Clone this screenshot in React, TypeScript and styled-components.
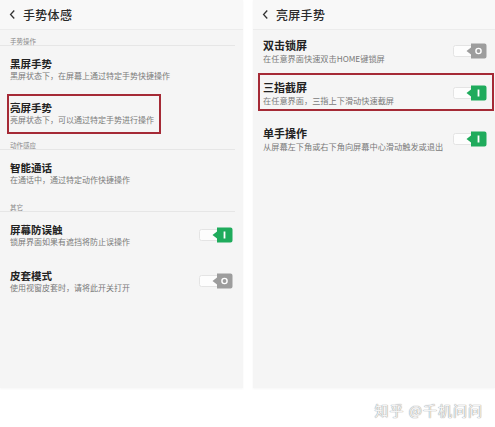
import styled, { createGlobalStyle } from 'styled-components';

const GlobalStyle = createGlobalStyle`
  html, body {
    margin: 0;
    padding: 0;
    background: #ffffff;
    font-family: "Noto Sans CJK SC", "Noto Sans", sans-serif;
  }
`;

type Setting = {
  title: string;
  desc: string;
  toggle?: 'on' | 'off';
  boxed?: boolean;
};

type Section = {
  label?: string;
  items: Setting[];
};

const leftSections: Section[] = [
  {
    label: '手势操作',
    items: [
      { title: '黑屏手势', desc: '黑屏状态下，在屏幕上通过特定手势快捷操作' },
      { title: '亮屏手势', desc: '亮屏状态下，可以通过特定手势进行操作', boxed: true },
    ],
  },
  {
    label: '动作感应',
    items: [{ title: '智能通话', desc: '在通话中，通过特定动作快捷操作' }],
  },
  {
    label: '其它',
    items: [
      { title: '屏幕防误触', desc: '锁屏界面如果有遮挡将防止误操作', toggle: 'on' },
      { title: '皮套模式', desc: '使用视窗皮套时，请将此开关打开', toggle: 'off' },
    ],
  },
];

const rightSections: Section[] = [
  {
    items: [
      { title: '双击锁屏', desc: '在任意界面快速双击HOME键锁屏', toggle: 'off' },
      { title: '三指截屏', desc: '在任意界面，三指上下滑动快速截屏', toggle: 'on', boxed: true },
      { title: '单手操作', desc: '从屏幕左下角或右下角向屏幕中心滑动触发或退出', toggle: 'on' },
    ],
  },
];

function Toggle({ on }: { on: boolean }) {
  return (
    <svg width="34" height="16" viewBox="0 0 34 16">
      <rect x="0.5" y="2.5" width="24" height="11" rx="2" fill="#fdfdfd" stroke="#e4e4e4" />
      <path
        d="M18 0.5 h13.5 a2 2 0 0 1 2 2 v11 a2 2 0 0 1 -2 2 h-13.5 v-4 l-4.5 -3.5 l4.5 -3.5 z"
        fill={on ? '#1fab5c' : '#9d9d9d'}
      />
      {on ? (
        <rect x="24.6" y="4.5" width="1.8" height="7" fill="#ffffff" />
      ) : (
        <circle cx="25.5" cy="8" r="2.6" fill="none" stroke="#ffffff" strokeWidth="1.4" />
      )}
    </svg>
  );
}

function Panel({ title, sections, wide }: { title: string; sections: Section[]; wide?: boolean }) {
  return (
    <PanelBox $wide={wide}>
      <Header>
        <Chevron viewBox="0 0 8 12">
          <path d="M6 1.5 L1.8 6 L6 10.5" fill="none" stroke="#333" strokeWidth="1.5" />
        </Chevron>
        <HeaderTitle>{title}</HeaderTitle>
      </Header>
      {sections.map((section, i) => (
        <div key={i}>
          {section.label && <SectionLabel>{section.label}</SectionLabel>}
          {section.items.map(item => (
            <Row key={item.title} $boxed={item.boxed} $wide={wide}>
              <RowInner $boxed={item.boxed} $stretch={wide}>
                <Texts>
                  <Title $wide={wide}>{item.title}</Title>
                  <Desc $wide={wide}>{item.desc}</Desc>
                </Texts>
                {item.toggle && <Toggle on={item.toggle === 'on'} />}
              </RowInner>
            </Row>
          ))}
        </div>
      ))}
    </PanelBox>
  );
}

export default function App() {
  return (
    <Page>
      <GlobalStyle />
      <Panels>
        <Panel title="手势体感" sections={leftSections} />
        <Panel title="亮屏手势" sections={rightSections} wide />
      </Panels>
      <Watermark>知乎 @千机问问</Watermark>
    </Page>
  );
}

const Page = styled.div`
  width: 495px;
  height: 427px;
  display: flex;
  flex-direction: column;
  overflow: hidden;
`;

const Panels = styled.div`
  display: flex;
  gap: 10px;
  height: 388px;
`;

const PanelBox = styled.div<{ $wide?: boolean }>`
  width: ${p => (p.$wide ? '242px' : '243px')};
  height: 100%;
  background: #f5f5f5;
  box-shadow: 0 1px 2px rgba(0, 0, 0, 0.04);
`;

const Header = styled.div`
  height: 30px;
  box-sizing: border-box;
  display: flex;
  align-items: center;
  gap: 7px;
  padding-left: 9px;
  background: #f8f8f8;
  border-bottom: 1px solid #ececec;
`;

const Chevron = styled.svg`
  width: 7px;
  height: 11px;
`;

const HeaderTitle = styled.div`
  font-size: 12px;
  font-weight: 500;
  color: #2a2a2a;
  letter-spacing: 0.3px;
  line-height: 14px;
`;

const SectionLabel = styled.div`
  height: 16px;
  box-sizing: border-box;
  padding: 7px 0 0 10px;
  font-size: 6.5px;
  line-height: 8px;
  color: #8a8a8a;
  border-bottom: 1px solid #e6e6e6;
  margin-right: 8px;
`;

const Row = styled.div<{ $boxed?: boolean; $wide?: boolean }>`
  box-sizing: border-box;
  padding: ${p =>
    p.$boxed
      ? p.$wide
        ? '1px 1px 7px 5px'
        : '2px 10px 0 7px'
      : p.$wide
        ? '9px 8px 9px 10px'
        : '11px 10px 11px 10px'};
`;

const RowInner = styled.div<{ $boxed?: boolean; $stretch?: boolean }>`
  display: flex;
  align-items: center;
  justify-content: space-between;
  box-sizing: border-box;
  width: ${p => (p.$boxed && !p.$stretch ? 'fit-content' : 'auto')};
  border: ${p => (p.$boxed ? '2px solid #a52a36' : 'none')};
  padding: ${p => (p.$boxed ? (p.$stretch ? '6px 5px 4px 3px' : '5px 5px 7px 1px') : '0')};
`;

const Texts = styled.div`
  display: flex;
  flex-direction: column;
  gap: 1px;
`;

const Title = styled.div<{ $wide?: boolean }>`
  font-size: ${p => (p.$wide ? '11px' : '10.5px')};
  line-height: 13px;
  font-weight: 700;
  color: #222;
`;

const Desc = styled.div<{ $wide?: boolean }>`
  font-size: ${p => (p.$wide ? '8.2px' : '8px')};
  line-height: 10px;
  color: #7a7a7a;
  white-space: nowrap;
`;

const Watermark = styled.div`
  align-self: flex-end;
  margin: 14px 12px 0 0;
  font-size: 14px;
  line-height: 16px;
  color: #f4f4f4;
  text-shadow: 0 0 1px #9a9a9a, 0 0 1px #9a9a9a;
  letter-spacing: 1px;
`;
